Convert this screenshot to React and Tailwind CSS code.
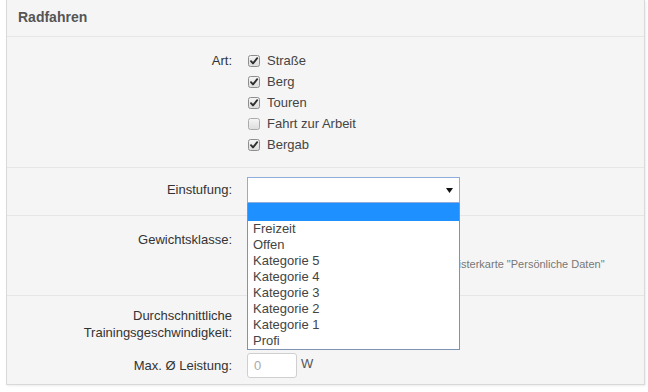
import React from 'react';

const options = ['Freizeit', 'Offen', 'Kategorie 5', 'Kategorie 4', 'Kategorie 3', 'Kategorie 2', 'Kategorie 1', 'Profi'];

const arten = [
  { name: 'Straße', checked: true },
  { name: 'Berg', checked: true },
  { name: 'Touren', checked: true },
  { name: 'Fahrt zur Arbeit', checked: false },
  { name: 'Bergab', checked: true },
];

const Checkbox = ({ checked }) => (
  <svg width="12" height="12" viewBox="0 0 12 12" className="shrink-0">
    <defs>
      <linearGradient id="cbg" x1="0" y1="0" x2="0" y2="1">
        <stop offset="0" stopColor="#f6f6f6" />
        <stop offset="1" stopColor="#dcdcdc" />
      </linearGradient>
    </defs>
    <rect x="0.5" y="0.5" width="11" height="11" rx="2" fill="url(#cbg)" stroke={checked ? '#8e8e8e' : '#ababab'} />
    {checked && (
      <path d="M3 6.2 L5 8.4 L9.2 3.2" fill="none" stroke="#2f2f2f" strokeWidth="1.9" strokeLinecap="round" strokeLinejoin="round" />
    )}
  </svg>
);

const Label = ({ children, className = '' }) => (
  <div className={`w-[240px] shrink-0 pr-[15px] text-right ${className}`}>{children}</div>
);

export default function App() {
  return (
    <div className="bg-white pl-[6px] pb-[6px] font-['Liberation_Sans',Arial,sans-serif] text-[13px] text-[#333]">
      <div className="w-[639px] bg-[#f5f5f5] border-x border-b border-[#d9d9d9] shadow-[1px_1px_2px_rgba(0,0,0,0.08)]">
        {/* header */}
        <div className="h-[37px] border-b border-[#e6e6e6] pl-[11px] flex items-center pb-[2px]">
          <span className="text-[14px] font-bold text-[#555]">Radfahren</span>
        </div>

        {/* Art */}
        <div className="flex pt-[13px] pb-[12px] border-b border-[#e6e6e6]">
          <Label className="leading-[21px]">Art:</Label>
          <div className="flex flex-col">
            {arten.map((a) => (
              <div key={a.name} className="h-[21px] flex items-center gap-[7px] pl-[1px]">
                <Checkbox checked={a.checked} />
                <span className="text-[13px] text-[#444]">{a.name}</span>
              </div>
            ))}
          </div>
        </div>

        {/* Einstufung */}
        <div className="relative z-10 flex items-center pt-[9px] pb-[12px] border-b border-[#e6e6e6]">
          <Label>Einstufung:</Label>
          <div className="relative">
            <div className="w-[213px] h-[26px] bg-white border border-[#8eacdc] flex items-center justify-end pr-[6px]">
              <svg width="7" height="5" viewBox="0 0 7 5">
                <path d="M0 0 L7 0 L3.5 5 Z" fill="#111" />
              </svg>
            </div>
            <div className="absolute left-0 top-full w-[213px] bg-white border-x border-b border-[#7f93b3]">
              <div className="h-[18px] bg-[#1e90ff]" />
              {options.map((o) => (
                <div key={o} className="h-[16px] leading-[16px] pl-[5px] text-[13px] text-[#444]">{o}</div>
              ))}
            </div>
          </div>
        </div>

        {/* Gewichtsklasse */}
        <div className="flex pt-[11px] pb-[23px] border-b border-[#e6e6e6]">
          <Label className="leading-[26px]">Gewichtsklasse:</Label>
          <div className="flex flex-col">
            <div className="w-[213px] h-[26px] bg-white border border-[#cccccc]" />
            <div className="mt-[3px] text-[11px] leading-[16px] text-[#777] whitespace-nowrap">
              Das Gewicht können Sie ändern in der Registerkarte "Persönliche Daten"
            </div>
          </div>
        </div>

        {/* Geschwindigkeit + Leistung */}
        <div className="pt-[11px] pb-[6px]">
          <div className="flex">
            <Label className="leading-[17px]">
              Durchschnittliche
              <br />
              Trainingsgeschwindigkeit:
            </Label>
          </div>
          <div className="flex items-center mt-[12px]">
            <Label>Max. Ø Leistung:</Label>
            <div className="w-[50px] h-[25px] bg-white border border-[#cfcfcf] rounded-[3px] flex items-center pl-[6px] text-[#aaa]">0</div>
            <span className="ml-[4px] text-[#555] -mt-[4px]">W</span>
          </div>
        </div>
      </div>
    </div>
  );
}
